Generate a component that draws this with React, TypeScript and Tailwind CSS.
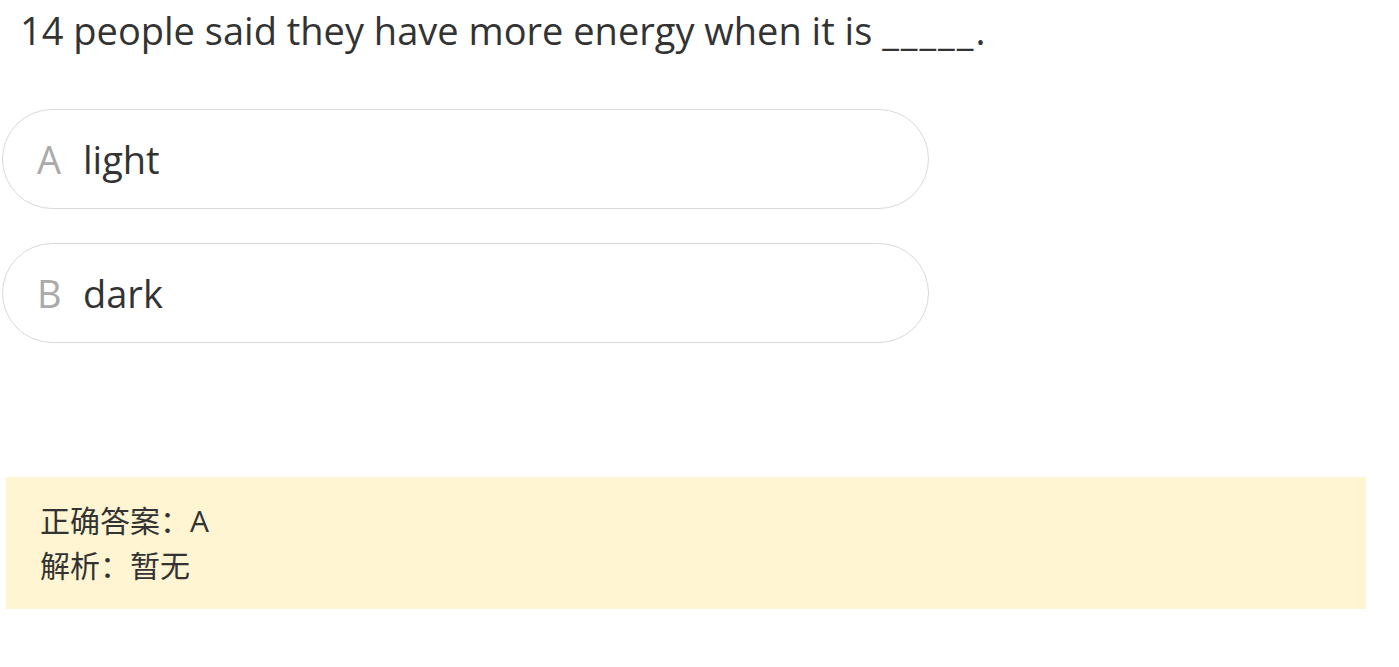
const options = [
  { key: "A", text: "light" },
  { key: "B", text: "dark" },
];

export default function App() {
  return (
    <div
      className="min-h-screen bg-white text-[#333]"
      style={{ fontFamily: '"Open Sans", "Noto Sans CJK SC", sans-serif' }}
    >
      <p className="pl-[20px] pt-[6px] text-[38px] leading-[48px]">
        14 people said they have more energy when it is{" "}
        <span className="tracking-[2px]">_____</span>.
      </p>
      <div className="mt-[55px] flex w-[929px] flex-col gap-[34px] pl-[2px]">
        {options.map((o) => (
          <div
            key={o.key}
            className="flex h-[100px] items-center rounded-full border border-[#d9d9d9] pl-[34px]"
          >
            <span className="w-[46px] text-[38px] text-[#aaa]">{o.key}</span>
            <span className="text-[38px]">{o.text}</span>
          </div>
        ))}
      </div>
      <div className="mx-[6px] mt-[134px] w-[1360px] bg-[#fff5d2] px-[34px] py-[21px] text-[30px] leading-[45px]">
        <p>正确答案：A</p>
        <p>解析：暂无</p>
      </div>
    </div>
  );
}
